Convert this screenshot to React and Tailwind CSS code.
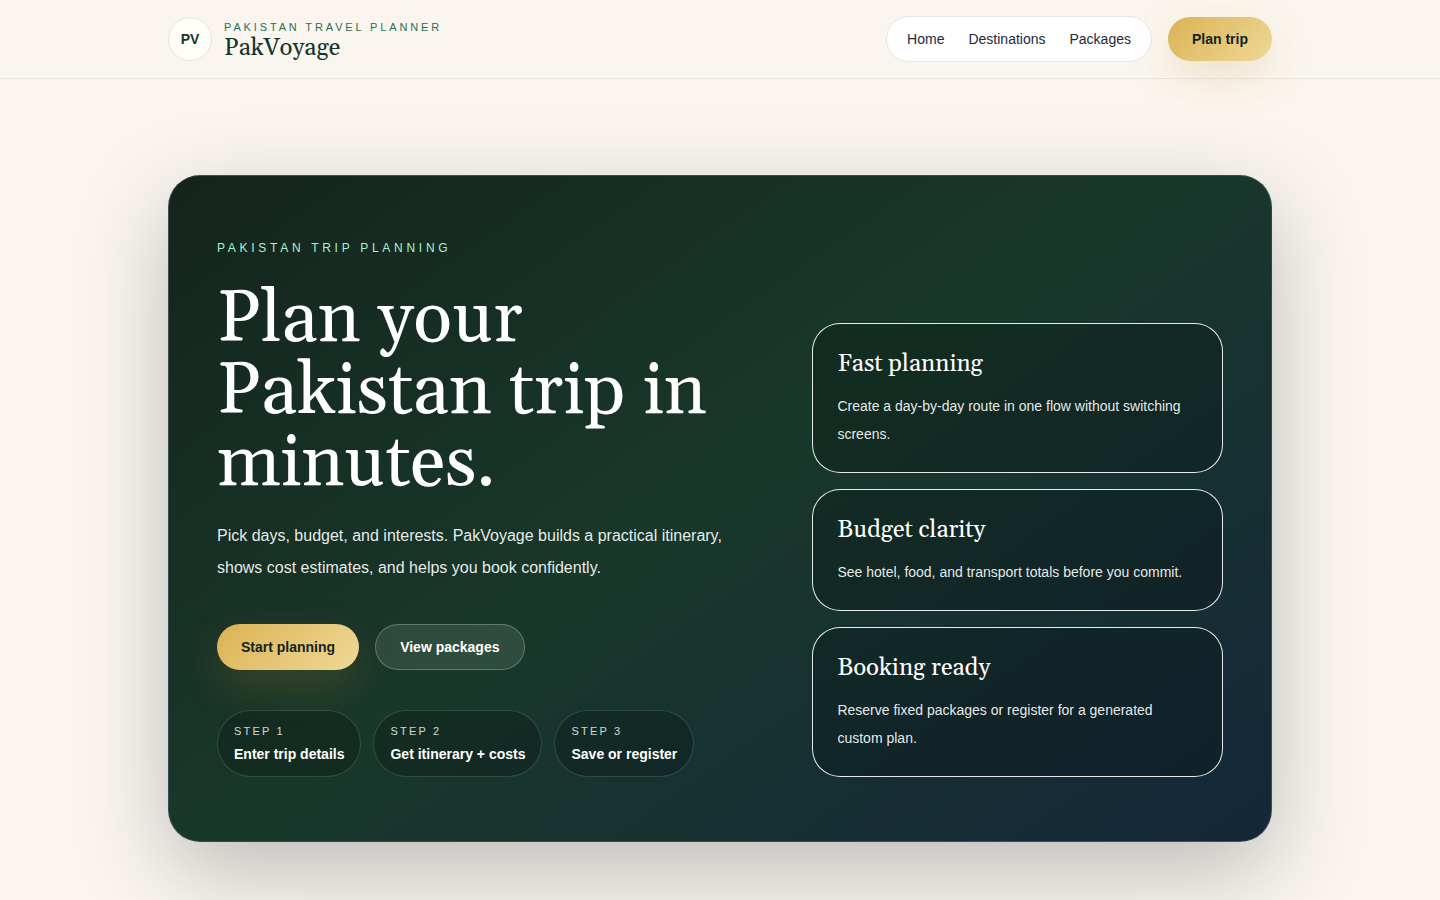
const navLinks = ["Home", "Destinations", "Packages"];

const steps = [
  { label: "Step 1", text: "Enter trip details" },
  { label: "Step 2", text: "Get itinerary + costs" },
  { label: "Step 3", text: "Save or register" },
];

const features = [
  { title: "Fast planning", text: "Create a day-by-day route in one flow without switching screens." },
  { title: "Budget clarity", text: "See hotel, food, and transport totals before you commit." },
  { title: "Booking ready", text: "Reserve fixed packages or register for a generated custom plan." },
];

const goldButton =
  "rounded-full bg-[linear-gradient(135deg,#dbb255,#efd996)] px-6 py-3 text-sm font-bold text-[#13231c] shadow-[0_16px_40px_rgba(201,138,50,0.2)]";

function Header() {
  return (
    <header className="border-b border-[#e8e7e2]">
      <div className="mx-auto flex max-w-6xl items-center justify-between px-6 py-4">
        <a href="#home" className="flex items-center gap-3">
          <span className="flex size-11 items-center justify-center rounded-full border border-[#e3e5e0] bg-[#fffdf8] text-sm font-bold text-[#12372a]">
            PV
          </span>
          <span className="flex flex-col">
            <span className="text-[11px] leading-[17px] tracking-[0.26em] text-[#2c6e51] uppercase">Pakistan travel planner</span>
            <span className="font-[Georgia,Gelasio,'Liberation_Serif',serif] text-2xl leading-6 text-[#12372a]">PakVoyage</span>
          </span>
        </a>
        <div className="flex items-center gap-4">
          <nav className="flex gap-6 rounded-full border border-[#e3e7e5] bg-white px-5 py-3 text-sm text-[#1e293b]">
            {navLinks.map((name) => (
              <a key={name} href={"#" + name.toLowerCase()}>
                {name}
              </a>
            ))}
          </nav>
          <button type="button" className={goldButton}>
            Plan trip
          </button>
        </div>
      </div>
    </header>
  );
}

function Hero() {
  return (
    <section className="grid grid-cols-[1.15fr_0.85fr] items-end gap-10 rounded-[32px] border border-white/15 bg-[linear-gradient(145deg,#14241d_0%,#18382a_48%,#14273a_100%)] px-12 py-16 text-white shadow-[0_30px_90px_rgba(15,23,32,0.26)]">
      <div>
        <p className="text-xs tracking-[0.31em] text-[#a7f3d0] uppercase">Pakistan trip planning</p>
        <h1 className="mt-7 font-[Georgia,Gelasio,'Liberation_Serif',serif] text-7xl leading-none">
          Plan your Pakistan trip in minutes.
        </h1>
        <p className="mt-5 max-w-[540px] text-base leading-8 text-white/92">
          Pick days, budget, and interests. PakVoyage builds a practical itinerary, shows cost estimates, and helps you
          book confidently.
        </p>
        <div className="mt-10 flex gap-4">
          <button type="button" className={goldButton}>
            Start planning
          </button>
          <button
            type="button"
            className="rounded-full border border-white/25 bg-white/10 px-6 py-3 text-sm font-bold text-white"
          >
            View packages
          </button>
        </div>
        <ol className="mt-10 flex gap-3">
          {steps.map((step) => (
            <li key={step.label} className="rounded-[34px] border border-white/15 bg-black/20 px-4 py-3">
              <p className="text-[11px] leading-[17px] tracking-[0.2em] text-white/80 uppercase">{step.label}</p>
              <p className="mt-1 text-sm font-bold">{step.text}</p>
            </li>
          ))}
        </ol>
      </div>
      <div className="flex flex-col gap-4">
        {features.map((item) => (
          <article key={item.title} className="rounded-[28px] border border-white/90 bg-black/20 p-6">
            <h2 className="font-[Georgia,Gelasio,'Liberation_Serif',serif] text-2xl">{item.title}</h2>
            <p className="mt-3 text-sm leading-7 text-white/92">{item.text}</p>
          </article>
        ))}
      </div>
    </section>
  );
}

export default function App() {
  return (
    <div className="min-h-screen overflow-x-hidden bg-[#faf6ef] font-['Helvetica_Neue',Helvetica,'Liberation_Sans',sans-serif]">
      <Header />
      <main className="mx-auto max-w-6xl px-6 py-24">
        <Hero />
      </main>
    </div>
  );
}
